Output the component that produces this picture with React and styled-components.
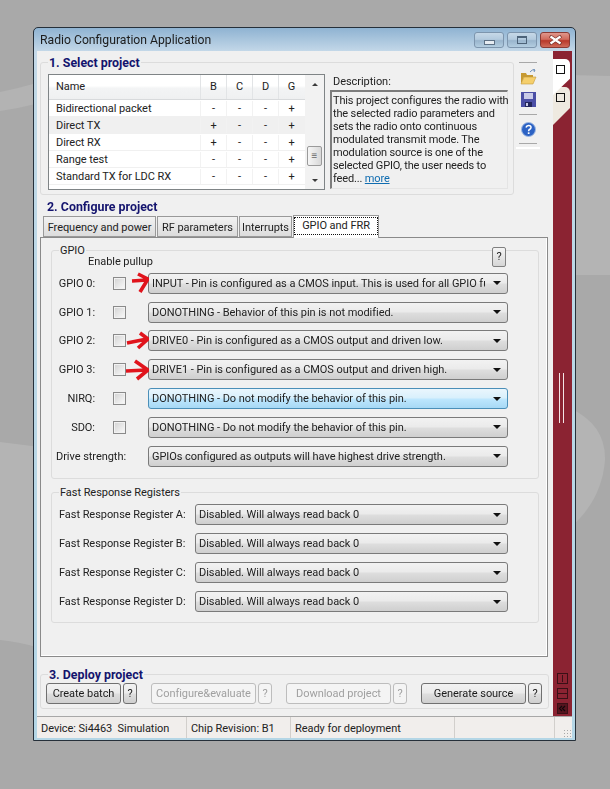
import React from "react";
import styled, { createGlobalStyle } from "styled-components";

const UI_FONT = `Roboto, "Noto Sans", sans-serif`;

const projects = [
  ["Bidirectional packet", "-", "-", "-", "+"],
  ["Direct TX", "+", "-", "-", "+"],
  ["Direct RX", "+", "-", "-", "+"],
  ["Range test", "-", "-", "-", "+"],
  ["Standard TX for LDC RX", "-", "-", "-", "+"],
];

const gpioRows = [
  { label: "GPIO 0:", value: "INPUT - Pin is configured as a CMOS input. This is used for all GPIO functions", arrow: "M7 9 L22 8 M13 2 L23 7 L15 20" },
  { label: "GPIO 1:", value: "DONOTHING - Behavior of this pin is not modified." },
  { label: "GPIO 2:", value: "DRIVE0 - Pin is configured as a CMOS output and driven low.", arrow: "M2 14 L22 10 M15 4 L23 10 L13 19" },
  { label: "GPIO 3:", value: "DRIVE1 - Pin is configured as a CMOS output and driven high.", arrow: "M1 13 L22 12 M10 3 L23 12 L12 21" },
  { label: "NIRQ:", value: "DONOTHING - Do not modify the behavior of this pin.", active: true },
  { label: "SDO:", value: "DONOTHING - Do not modify the behavior of this pin." },
];

const frrRows = ["A", "B", "C", "D"];

function FolderIcon() {
  return (
    <svg width="17" height="16" viewBox="0 0 17 16">
      <path d="M1 4 L6 4 L7 6 L13 6 L13 8 L4 8 L1 15 Z" fill="#c79a32" />
      <path d="M4 8 L16 8 L13 15 L1 15 Z" fill="#f5cf6c" stroke="#c49a3c" strokeWidth="0.6" />
      <path d="M10 3 Q12 0 15 1 M15 1 L13 0 M15 1 L14 3" fill="none" stroke="#6d8fb8" strokeWidth="1" />
    </svg>
  );
}

function SaveIcon() {
  return (
    <svg width="15" height="15" viewBox="0 0 15 15">
      <rect x="0" y="0" width="15" height="15" fill="#4b4fa6" />
      <rect x="3" y="1" width="9" height="6" fill="#c9cbe8" />
      <rect x="4" y="10" width="7" height="5" fill="#23265c" />
      <rect x="5" y="11" width="2" height="3" fill="#c9cbe8" />
    </svg>
  );
}

function HelpIcon() {
  return (
    <svg width="15" height="15" viewBox="0 0 15 15">
      <circle cx="7.5" cy="7.5" r="7" fill="#2c62c4" stroke="#9fb9e2" strokeWidth="1" />
      <path d="M5 5.5 Q5.5 3.3 7.7 3.4 Q10.2 3.6 10 5.6 Q9.8 6.8 8.4 7.5 Q7.6 8 7.6 9.3" fill="none" stroke="#fff" strokeWidth="1.5" />
      <rect x="6.8" y="10.3" width="1.7" height="1.7" fill="#fff" />
    </svg>
  );
}

function CloseIcon() {
  return (
    <svg width="15" height="10" viewBox="0 0 15 10">
      <path d="M2 1 L13 9 M13 1 L2 9" stroke="#6b2a24" strokeWidth="3.4" />
      <path d="M2.5 1.5 L12.5 8.5 M12.5 1.5 L2.5 8.5" stroke="#fff" strokeWidth="2.2" />
    </svg>
  );
}

function RailGlyph({ kind }) {
  return (
    <svg width="11" height="11" viewBox="0 0 11 11">
      <rect x="0.5" y="0.5" width="10" height="10" fill={kind === "back" ? "#55141e" : "none"} stroke="#3a1016" />
      {kind === "split" && <path d="M5.5 2 V9" stroke="#3a1016" />}
      {kind === "join" && <path d="M1 5.5 H10" stroke="#3a1016" />}
      {kind === "back" && <path d="M5 3 L2.5 5.5 L5 8 M8 3 L5.5 5.5 L8 8" fill="none" stroke="#12060a" strokeWidth="1.2" />}
    </svg>
  );
}

function RedArrow({ path }) {
  return (
    <ArrowMark width="24" height="23" viewBox="0 0 24 23">
      <path d={path} fill="none" stroke="#e0141c" strokeWidth="3.6" strokeLinejoin="round" />
    </ArrowMark>
  );
}

function Dropdown({ active, children }) {
  return (
    <Select $active={active}>
      <SelectText>{children}</SelectText>
      <SelectCaret />
    </Select>
  );
}

function App() {
  return (
    <>
      <GlobalStyle />
      <Backdrop viewBox="0 0 610 789" preserveAspectRatio="none">
        <path d="M0 92 Q20 88 40 82 L40 103 Q20 108 0 111 Z" fill="#b3b3b3" />
        <path d="M0 442 L40 447 L40 648 Q20 642 0 640 Z" fill="#b4b4b4" />
        <path d="M570 75 L610 76 L610 275 L570 275 Z" fill="#b4b4b4" />
        <path d="M570 408 Q606 425 605 460 Q602 500 570 528 Z" fill="#b4b4b4" />
      </Backdrop>
      <Window>
        <TitleBar>
          <TitleText>Radio Configuration Application</TitleText>
          <Caption>
            <CaptionButton>
              <MinGlyph />
            </CaptionButton>
            <CaptionButton>
              <MaxGlyph />
            </CaptionButton>
            <CaptionButton $close>
              <CloseIcon />
            </CaptionButton>
          </Caption>
        </TitleBar>

        <Body>
          <Main>
            <TopRow>
              <SelectGroup>
                <Legend $navy $left={7}>1. Select project</Legend>
                <ProjectList>
                  <ProjectTable>
                    <HeaderRow>
                      <NameCell $head>Name</NameCell>
                      <FlagCell $head>B</FlagCell>
                      <FlagCell $head>C</FlagCell>
                      <FlagCell $head>D</FlagCell>
                      <FlagCell $head>G</FlagCell>
                    </HeaderRow>
                    {projects.map(([name, ...flags], i) => (
                      <ProjectRow key={name} $selected={i === 1}>
                        <NameCell>{name}</NameCell>
                        {flags.map((flag, j) => (
                          <FlagCell key={j}>{flag}</FlagCell>
                        ))}
                      </ProjectRow>
                    ))}
                  </ProjectTable>
                  <ScrollBar>
                    <ScrollArrow $up />
                    <ScrollThumb>≡</ScrollThumb>
                    <ScrollArrow />
                  </ScrollBar>
                </ProjectList>
                <DescriptionColumn>
                  <DescriptionLabel>Description:</DescriptionLabel>
                  <DescriptionBox>
                    This project configures the radio with<br />
                    the selected radio parameters and<br />
                    sets the radio onto continuous<br />
                    modulated transmit mode. The<br />
                    modulation source is one of the<br />
                    selected GPIO, the user needs to<br />
                    feed... <MoreLink>more</MoreLink>
                  </DescriptionBox>
                </DescriptionColumn>
              </SelectGroup>
              <ToolStrip>
                <ToolRule />
                <ToolIcon $top={6} $bottom={2}>
                  <FolderIcon />
                </ToolIcon>
                <ToolIcon $top={5} $bottom={7}>
                  <SaveIcon />
                </ToolIcon>
                <ToolRule />
                <ToolIcon $top={7} $bottom={6}>
                  <HelpIcon />
                </ToolIcon>
                <ToolRule />
                <ToolShine />
              </ToolStrip>
            </TopRow>

            <SectionTitle>2. Configure project</SectionTitle>
            <TabStrip>
              <Tab $w={113}>Frequency and power</Tab>
              <Tab $w={81}>RF parameters</Tab>
              <Tab $w={53}>Interrupts</Tab>
              <Tab $w={86} $active>
                <TabFocus>GPIO and FRR</TabFocus>
              </Tab>
            </TabStrip>
            <TabPanel>
              <GpioGroup>
                <Legend $left={7}>GPIO</Legend>
                <HelpCorner>?</HelpCorner>
                <PullupHeader>Enable pullup</PullupHeader>
                {gpioRows.map((row) => (
                  <GpioRow key={row.label}>
                    <PinLabel>{row.label}</PinLabel>
                    <CheckBox />
                    <SelectSlot>
                      {row.arrow && <RedArrow path={row.arrow} />}
                      <Dropdown active={row.active}>{row.value}</Dropdown>
                    </SelectSlot>
                  </GpioRow>
                ))}
                <GpioRow>
                  <DriveLabel>Drive strength:</DriveLabel>
                  <Dropdown>GPIOs configured as outputs will have highest drive strength.</Dropdown>
                </GpioRow>
              </GpioGroup>
              <FrrGroup>
                <Legend $left={7}>Fast Response Registers</Legend>
                {frrRows.map((letter) => (
                  <FrrRow key={letter}>
                    <FrrLabel>Fast Response Register {letter}:</FrrLabel>
                    <Dropdown>Disabled. Will always read back 0</Dropdown>
                  </FrrRow>
                ))}
              </FrrGroup>
            </TabPanel>

            <DeployGroup>
              <Legend $navy $left={7}>3. Deploy project</Legend>
              <ButtonPair>
                <PushButton $w={75}>Create batch</PushButton>
                <PushButton $w={14}>?</PushButton>
              </ButtonPair>
              <ButtonPair>
                <PushButton $w={105} $disabled>Configure&amp;evaluate</PushButton>
                <PushButton $w={14} $disabled>?</PushButton>
              </ButtonPair>
              <ButtonPair>
                <PushButton $w={105} $disabled>Download project</PushButton>
                <PushButton $w={14} $disabled>?</PushButton>
              </ButtonPair>
              <ButtonPair>
                <PushButton $w={105}>Generate source</PushButton>
                <PushButton $w={14}>?</PushButton>
              </ButtonPair>
            </DeployGroup>
          </Main>

          <SideRail>
            <RailTabs>
              <RailTab>
                <RailBox />
              </RailTab>
              <RailTab $back>
                <RailBox />
              </RailTab>
            </RailTabs>
            <RailGrip />
            <RailButtons>
              <RailGlyph kind="split" />
              <RailGlyph kind="join" />
              <RailGlyph kind="back" />
            </RailButtons>
          </SideRail>
        </Body>

        <StatusBar>
          <StatusCell $w={150}>Device: Si4463&nbsp; Simulation</StatusCell>
          <StatusCell $w={104}>Chip Revision: B1</StatusCell>
          <StatusCell $w={164}>Ready for deployment</StatusCell>
          <StatusCell $w={100} />
          <StatusGrip />
        </StatusBar>
      </Window>
    </>
  );
}

const GlobalStyle = createGlobalStyle`
  html, body {
    margin: 0;
    padding: 0;
    background: #a9a9a9;
    overflow: hidden;
  }

  * {
    box-sizing: border-box;
  }

  body {
    font-family: ${UI_FONT};
    font-size: 11px;
    letter-spacing: -0.05px;
    color: #222;
  }
`;

const Backdrop = styled.svg`
  position: fixed;
  left: 0;
  top: 0;
  width: 610px;
  height: 789px;
`;

const Window = styled.div`
  position: relative;
  display: flex;
  flex-direction: column;
  width: 543px;
  height: 714px;
  margin: 27px 0 0 33px;
  padding: 0 3px 3px;
  border: 1px solid #26303a;
  border-radius: 5px 5px 0 0;
  background: linear-gradient(#8fb3d2 0, #c5d9e9 24px, #c0d8e6 60px, #b4d6e6 100%);
`;

const TitleBar = styled.div`
  display: flex;
  align-items: flex-start;
  justify-content: space-between;
  height: 23px;
  flex: none;
`;

const TitleText = styled.span`
  padding: 5px 0 0 3px;
  font-size: 12.2px;
  letter-spacing: 0;
  line-height: 15px;
  color: #1c1c1c;
`;

const Caption = styled.div`
  display: flex;
  gap: 3px;
  margin: 4px 2px 0 0;
`;

const CaptionButton = styled.div`
  display: flex;
  align-items: center;
  justify-content: center;
  width: 30px;
  height: 16px;
  border: 1px solid ${(p) => (p.$close ? "#8a3a34" : "#7d95ad")};
  border-radius: 3px;
  background: ${(p) =>
    p.$close
      ? "linear-gradient(#e0978c 0, #d06a5c 45%, #b8382a 55%, #cf6b5a 100%)"
      : "linear-gradient(#c6d8e7 0, #b3cade 45%, #99b5cd 55%, #b3cde0 100%)"};
`;

const MinGlyph = styled.i`
  display: block;
  width: 11px;
  height: 5px;
  margin-top: 5px;
  border: 1px solid #5d7186;
  background: #e6ecf2;
`;

const MaxGlyph = styled.i`
  display: block;
  width: 10px;
  height: 8px;
  border: 1px solid #4d6379;
  border-top-width: 2px;
`;

const Body = styled.div`
  display: flex;
  flex: none;
  height: 665px;
  background: #f0f0f0;
`;

const Main = styled.div`
  width: 516px;
  padding-left: 3px;
`;

const TopRow = styled.div`
  display: flex;
  margin-top: 11px;
`;

const GroupBox = styled.div`
  position: relative;
  border: 1px solid #dcdcdc;
  border-radius: 3px;
`;

const Legend = styled.span`
  position: absolute;
  top: -8px;
  left: ${(p) => p.$left}px;
  padding: 0 1px;
  background: #f0f0f0;
  font-size: ${(p) => (p.$navy ? "12.4px" : "11px")};
  font-weight: ${(p) => (p.$navy ? 700 : 400)};
  letter-spacing: ${(p) => (p.$navy ? "0" : "-0.05px")};
  line-height: 15px;
  color: ${(p) => (p.$navy ? "#14146e" : "#222")};
  white-space: nowrap;
`;

const SelectGroup = styled(GroupBox)`
  display: flex;
  gap: 5px;
  width: 474px;
  height: 133px;
  padding: 11px 0 0 7px;
`;

const ProjectList = styled.div`
  display: flex;
  width: 277px;
  height: 116px;
  border: 1px solid #7f8486;
  background: #fff;
  overflow: hidden;
`;

const ProjectTable = styled.div`
  flex: 1;
`;

const HeaderRow = styled.div`
  display: flex;
  height: 25px;
  background: linear-gradient(#fff 0, #fff 45%, #f3f4f5 55%, #eff0f1 100%);
  border-bottom: 1px solid #d8dadc;
  align-items: center;
`;

const ProjectRow = styled.div`
  display: flex;
  align-items: center;
  height: 17px;
  padding-top: 1px;
  border-bottom: 1px solid #f0f0f0;
  background: ${(p) => (p.$selected ? "#f0f0f0" : "#fff")};
`;

const NameCell = styled.div`
  width: 151px;
  padding-left: 7px;
  white-space: nowrap;
  ${(p) => p.$head && "height: 100%; line-height: 24px;"}
`;

const FlagCell = styled.div`
  width: 26px;
  text-align: center;
  border-left: 1px solid ${(p) => (p.$head ? "#e2e4e6" : "#f2f2f2")};
  ${(p) => (p.$head ? "height: 100%; line-height: 24px;" : "line-height: 15px;")}
`;

const ScrollBar = styled.div`
  display: flex;
  flex-direction: column;
  align-items: center;
  width: 19px;
  background: #f2f2f2;
  padding: 8px 0 5px;
`;

const ScrollArrow = styled.i`
  width: 0;
  height: 0;
  border-left: 3px solid transparent;
  border-right: 3px solid transparent;
  ${(p) => (p.$up ? "border-bottom: 3px solid #3a3a3a;" : "border-top: 3px solid #3a3a3a;")}
`;

const ScrollThumb = styled.div`
  width: 15px;
  height: 20px;
  margin: 60px 0 13px;
  border: 1px solid #9a9a9a;
  border-radius: 2px;
  background: linear-gradient(90deg, #f6f6f6, #d8d8d8);
  font-size: 10px;
  line-height: 17px;
  text-align: center;
  color: #666;
`;

const DescriptionColumn = styled.div`
  width: 178px;
`;

const DescriptionLabel = styled.div`
  height: 16px;
  padding-left: 3px;
  line-height: 16px;
`;

const DescriptionBox = styled.div`
  height: 99px;
  padding: 2px 0 0 1px;
  border: 1px solid #e4e4e4;
  border-top: 2px solid #7c7c7c;
  border-left: 2px solid #7c7c7c;
  letter-spacing: -0.15px;
  line-height: 13px;
  white-space: nowrap;
`;

const MoreLink = styled.span`
  color: #0f6cb0;
  text-decoration: underline;
`;

const ToolStrip = styled.div`
  display: flex;
  flex-direction: column;
  align-items: center;
  width: 18px;
  margin-left: 5px;
`;

const ToolRule = styled.div`
  width: 18px;
  height: 1px;
  flex: none;
  background: #a8a8a8;
`;

const ToolShine = styled.div`
  width: 24px;
  height: 2px;
  flex: none;
  margin-top: 3px;
  background: #fff;
`;

const ToolIcon = styled.div`
  display: flex;
  justify-content: center;
  padding: ${(p) => p.$top}px 0 ${(p) => p.$bottom}px;
  line-height: 0;
`;

const SectionTitle = styled.div`
  height: 15px;
  margin: 4px 0 0 7px;
  font-size: 12.4px;
  font-weight: 700;
  letter-spacing: 0;
  line-height: 15px;
  color: #14146e;
`;

const TabStrip = styled.div`
  display: flex;
  align-items: flex-end;
  gap: 1px;
  height: 23px;
  padding-left: 3px;
`;

const Tab = styled.div`
  position: relative;
  width: ${(p) => p.$w}px;
  height: ${(p) => (p.$active ? "23px" : "21px")};
  padding: ${(p) => (p.$active ? "2px" : "3px")} 1px 0;
  margin-bottom: ${(p) => (p.$active ? "-1px" : "0")};
  border: 1px solid #999;
  border-bottom: ${(p) => (p.$active ? "none" : "1px solid #999")};
  background: ${(p) => (p.$active ? "#fff" : "linear-gradient(#f2f2f2, #dcdcdc)")};
  line-height: 16px;
  text-align: center;
  white-space: nowrap;
  z-index: ${(p) => (p.$active ? 1 : 0)};
`;

const TabFocus = styled.span`
  display: block;
  outline: 1px dotted #111;
  outline-offset: 0;
`;

const TabPanel = styled.div`
  width: 508px;
  height: 420px;
  padding: 12px 0 0 10px;
  border: 1px solid #8a8a8a;
  background: #f0f0f0;
  box-shadow: inset -1px -1px 0 #fff;
`;

const GpioGroup = styled(GroupBox)`
  width: 488px;
  height: 229px;
  padding: 5px 0 0 4px;
`;

const HelpCorner = styled.div`
  position: absolute;
  right: 32px;
  top: -4px;
  width: 14px;
  height: 20px;
  border: 1px solid #808080;
  border-radius: 2px;
  background: linear-gradient(#f4f4f4, #d6d6d6);
  line-height: 18px;
  text-align: center;
`;

const PullupHeader = styled.div`
  height: 13px;
  padding-left: 32px;
  line-height: 12px;
`;

const GpioRow = styled.div`
  display: grid;
  grid-template-columns: 57px 35px 360px;
  align-items: center;
  height: 28.8px;
`;

const PinLabel = styled.div`
  padding-right: 18px;
  text-align: right;
  white-space: nowrap;
`;

const DriveLabel = styled.div`
  grid-column: 1 / 3;
  white-space: nowrap;
`;

const CheckBox = styled.div`
  width: 13px;
  height: 13px;
  border: 1px solid #8a8a8a;
  background: linear-gradient(135deg, #d2d2d2, #fbfbfb);
  box-shadow: inset 0 0 0 1px #f2f2f2;
`;

const SelectSlot = styled.div`
  position: relative;
`;

const ArrowMark = styled.svg`
  position: absolute;
  left: -23px;
  top: -1px;
  z-index: 2;
`;

const Select = styled.div`
  display: flex;
  align-items: center;
  width: 100%;
  height: 21px;
  padding: 0 6px 0 3px;
  border: 1px solid ${(p) => (p.$active ? "#4b8fb8" : "#7a7a7a")};
  border-radius: 3px;
  background: ${(p) =>
    p.$active
      ? "linear-gradient(#eaf6fd 0, #d9f0fc 45%, #bde6fd 55%, #a7d9f5 100%)"
      : "linear-gradient(#f2f2f2 0, #ebebeb 45%, #dddddd 55%, #cfcfcf 100%)"};
`;

const SelectText = styled.span`
  flex: 1;
  min-width: 0;
  padding-top: 1px;
  overflow: hidden;
  white-space: nowrap;
  line-height: 18px;
`;

const SelectCaret = styled.i`
  flex: none;
  width: 0;
  height: 0;
  margin-left: 8px;
  border-left: 4px solid transparent;
  border-right: 4px solid transparent;
  border-top: 4px solid #111;
`;

const FrrGroup = styled(GroupBox)`
  width: 488px;
  height: 131px;
  margin-top: 13px;
  padding: 7px 0 0 7px;
`;

const FrrRow = styled.div`
  display: grid;
  grid-template-columns: 136px 313px;
  align-items: center;
  height: 29px;
`;

const FrrLabel = styled.div`
  white-space: nowrap;
`;

const DeployGroup = styled(GroupBox)`
  display: flex;
  gap: 14px;
  width: 509px;
  height: 35px;
  margin-top: 17px;
  padding: 8px 0 0 5px;
`;

const ButtonPair = styled.div`
  display: flex;
  gap: 2px;
`;

const PushButton = styled.div`
  width: ${(p) => p.$w}px;
  height: 21px;
  border: 1px solid ${(p) => (p.$disabled ? "#bdbdbd" : "#707070")};
  border-radius: 3px;
  background: ${(p) =>
    p.$disabled ? "#f4f4f4" : "linear-gradient(#f2f2f2 0, #ebebeb 45%, #dddddd 55%, #cfcfcf 100%)"};
  color: ${(p) => (p.$disabled ? "#a0a0a0" : "#1c1c1c")};
  line-height: 19px;
  text-align: center;
  white-space: nowrap;
`;

const SideRail = styled.div`
  display: flex;
  flex-direction: column;
  align-items: flex-start;
  width: 19px;
  background: #8b2332;
`;

const RailTabs = styled.div`
  height: 75px;
  padding-top: 8px;
`;

const RailTab = styled.div`
  position: relative;
  width: 17px;
  height: ${(p) => (p.$back ? "38px" : "36px")};
  margin-top: ${(p) => (p.$back ? "-8px" : "0")};
  padding: 6px 0 0 3px;
  background: ${(p) => (p.$back ? "#eee9e0" : "#fff")};
  border-radius: 0 5px 0 0;
  clip-path: polygon(0 0, 100% 0, 100% 55%, 0 100%);
  z-index: ${(p) => (p.$back ? 0 : 1)};
`;

const RailBox = styled.div`
  width: 9px;
  height: 9px;
  border: 1px solid #111;
`;

const RailGrip = styled.div`
  width: 5px;
  height: 50px;
  margin: 247px 0 0 6px;
  border-left: 1px solid #f3e4e6;
  border-right: 1px solid #f3e4e6;
`;

const RailButtons = styled.div`
  display: flex;
  flex-direction: column;
  gap: 4px;
  margin: auto 0 2px 4px;
  line-height: 0;
`;

const StatusBar = styled.div`
  display: flex;
  position: relative;
  flex: none;
  height: 22px;
  border-top: 1px solid #a8a8a8;
  background: #f1eeec;
  line-height: 23px;
`;

const StatusCell = styled.div`
  width: ${(p) => p.$w}px;
  padding-left: 4px;
  border-right: 1px solid #d2cfcc;
  white-space: nowrap;
`;

const StatusGrip = styled.i`
  position: absolute;
  right: 1px;
  bottom: 1px;
  width: 8px;
  height: 8px;
  background: radial-gradient(circle, #a8a8a8 1px, transparent 1px) 0 0 / 3px 3px;
`;

export default App;
